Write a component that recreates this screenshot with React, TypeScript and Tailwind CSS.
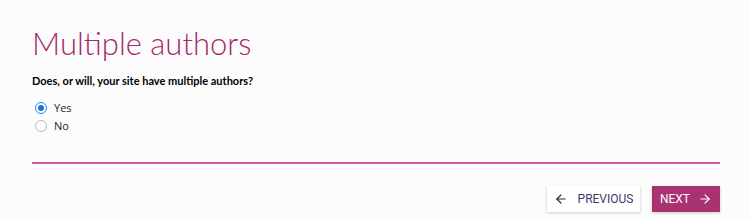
import { ArrowLeft, ArrowRight } from "lucide-react";

export default function App() {
  return (
    <div className="min-h-[221px] w-full bg-[#fdfcfd] pl-8 pr-[30px] pt-[23px] font-['Open_Sans',sans-serif] text-[#1e1e1e]">
      <h1 className="font-['Lato',sans-serif] text-[31px] font-light leading-[40px] text-[#a4286a]">
        Multiple authors
      </h1>
      <p className="mt-[10px] font-['Lato',sans-serif] text-[11px] font-bold leading-[16px] text-black">
        Does, or will, your site have multiple authors?
      </p>
      <div className="mt-[11px] flex flex-col gap-[2px] pl-[3px]">
        <label className="flex h-[16px] items-center gap-[7px] text-[11px]">
          <span className="flex h-[12px] w-[12px] items-center justify-center rounded-full border border-[#1e87f0] bg-white">
            <span className="h-[6px] w-[6px] rounded-full bg-[#1e6fd0]" />
          </span>
          Yes
        </label>
        <label className="flex h-[16px] items-center gap-[7px] text-[11px]">
          <span className="h-[12px] w-[12px] rounded-full border border-[#b8b8b8] bg-white" />
          No
        </label>
      </div>
      <div className="mt-[28px] h-[2px] bg-[#d05a9c]" />
      <div className="mt-[22px] flex justify-end gap-3">
        <button className="flex h-[26px] w-[93px] items-center justify-center gap-[10px] bg-white font-['Roboto',sans-serif] text-[12px] uppercase text-[#3a3a6a] shadow-[0_1px_3px_rgba(0,0,0,0.2)]">
          <ArrowLeft size={14} strokeWidth={2} className="text-[#222]" />
          Previous
        </button>
        <button className="flex h-[26px] w-[68px] items-center justify-center gap-[8px] bg-[#a93271] font-['Roboto',sans-serif] text-[12px] uppercase text-white shadow-[0_1px_3px_rgba(0,0,0,0.2)]">
          Next
          <ArrowRight size={14} strokeWidth={2} />
        </button>
      </div>
    </div>
  );
}
